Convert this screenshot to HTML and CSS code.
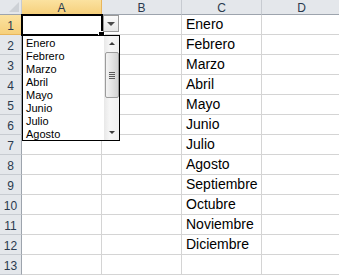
FILE: index.html
```html
<!DOCTYPE html>
<html>
<head>
<meta charset="utf-8">
<link rel="stylesheet" href="styles.css">
</head>
<body>
<div class="sheet">
  <div class="grid">
    <div class="hd corner"><span class="tri"></span></div>
    <div class="hd col sel">A</div>
    <div class="hd col">B</div>
    <div class="hd col">C</div>
    <div class="hd col">D</div>

    <div class="hd row sel">1</div><div class="c"></div><div class="c"></div><div class="c t">Enero</div><div class="c"></div>
    <div class="hd row">2</div><div class="c"></div><div class="c"></div><div class="c t">Febrero</div><div class="c"></div>
    <div class="hd row">3</div><div class="c"></div><div class="c"></div><div class="c t">Marzo</div><div class="c"></div>
    <div class="hd row">4</div><div class="c"></div><div class="c"></div><div class="c t">Abril</div><div class="c"></div>
    <div class="hd row">5</div><div class="c"></div><div class="c"></div><div class="c t">Mayo</div><div class="c"></div>
    <div class="hd row">6</div><div class="c"></div><div class="c"></div><div class="c t">Junio</div><div class="c"></div>
    <div class="hd row">7</div><div class="c"></div><div class="c"></div><div class="c t">Julio</div><div class="c"></div>
    <div class="hd row">8</div><div class="c"></div><div class="c"></div><div class="c t">Agosto</div><div class="c"></div>
    <div class="hd row">9</div><div class="c"></div><div class="c"></div><div class="c t">Septiembre</div><div class="c"></div>
    <div class="hd row">10</div><div class="c"></div><div class="c"></div><div class="c t">Octubre</div><div class="c"></div>
    <div class="hd row">11</div><div class="c"></div><div class="c"></div><div class="c t">Noviembre</div><div class="c"></div>
    <div class="hd row">12</div><div class="c"></div><div class="c"></div><div class="c t">Diciembre</div><div class="c"></div>
    <div class="hd row">13</div><div class="c"></div><div class="c"></div><div class="c"></div><div class="c"></div>
  </div>

  <div class="selbox"><span class="handle"></span></div>
  <div class="ddbtn"><span class="dtri"></span></div>

  <div class="list">
    <ul class="items">
      <li>Enero</li>
      <li>Febrero</li>
      <li>Marzo</li>
      <li>Abril</li>
      <li>Mayo</li>
      <li>Junio</li>
      <li>Julio</li>
      <li>Agosto</li>
    </ul>
    <div class="sb">
      <div class="sb-up"><span class="utri"></span></div>
      <div class="thumb">
        <span class="grip"></span><span class="grip"></span><span class="grip"></span><span class="grip"></span>
      </div>
      <div class="sb-track"></div>
      <div class="sb-down"><span class="dtri2"></span></div>
    </div>
  </div>
</div>
</body>
</html>
```

FILE: styles.css
```css
html, body {
  margin: 0;
  padding: 0;
  background: #ffffff;
}
.sheet {
  position: relative;
  width: 339px;
  height: 276px;
  overflow: hidden;
}
.grid {
  display: grid;
  grid-template-columns: 22px 80px 80px 80px 80px;
  grid-template-rows: 15px repeat(13, 20px);
  font-family: "Liberation Sans", Arial, sans-serif;
}
.grid > div {
  box-sizing: border-box;
}
.c {
  border-right: 1px solid #d4d4d4;
  border-bottom: 1px solid #d4d4d4;
  background: #ffffff;
}
.t {
  font-size: 14px;
  color: #000000;
  display: flex;
  align-items: flex-end;
  padding: 0 0 2px 4px;
  line-height: 16px;
}
.hd {
  background: #e4e7eb;
  color: #2a3a4e;
  font-size: 12px;
  display: flex;
  align-items: center;
  justify-content: center;
}
.col {
  border-right: 1px solid #c7cbd1;
  border-bottom: 1px solid #9da4ad;
  padding-top: 1px;
}
.row {
  border-right: 1px solid #9da4ad;
  border-bottom: 1px solid #c7cbd1;
  padding-top: 2px;
}
.hd.sel {
  background: linear-gradient(#fbe2a0, #f6d07c);
  color: #2a3a4e;
}
.col.sel {
  border-bottom: 1px solid #e7a53b;
  border-right: 1px solid #e8b65c;
}
.row.sel {
  border-right: 1px solid #e7a53b;
  border-bottom: 1px solid #e8b65c;
}
.corner {
  position: relative;
  border-right: 1px solid #c7cbd1;
  border-bottom: 1px solid #9da4ad;
}
.tri {
  position: absolute;
  right: 2px;
  bottom: 2px;
  width: 0;
  height: 0;
  border-left: 10px solid transparent;
  border-bottom: 10px solid #cdd1d6;
}
.selbox {
  position: absolute;
  left: 21px;
  top: 14px;
  width: 82px;
  height: 22px;
  box-sizing: border-box;
  border: 2px solid #000000;
}
.handle {
  position: absolute;
  right: -4px;
  bottom: -4px;
  width: 5px;
  height: 5px;
  background: #000000;
  border: 1px solid #ffffff;
}
.ddbtn {
  position: absolute;
  left: 103px;
  top: 15px;
  width: 16px;
  height: 17px;
  box-sizing: border-box;
  border: 1px solid #9a9a9a;
  background: linear-gradient(#fbfbfb, #e6e6e6);
  display: flex;
  align-items: center;
  justify-content: center;
}
.dtri {
  width: 0;
  height: 0;
  border-left: 4px solid transparent;
  border-right: 4px solid transparent;
  border-top: 4px solid #4a4a4a;
  margin-top: 1px;
}
.list {
  position: absolute;
  left: 22px;
  top: 35px;
  width: 98px;
  height: 106px;
  box-sizing: border-box;
  border: 1px solid #000000;
  background: #ffffff;
  display: flex;
}
.items {
  list-style: none;
  margin: 0;
  padding: 1px 0 0 3px;
  flex: 1;
  font-family: "Liberation Sans", Arial, sans-serif;
  font-size: 11px;
  line-height: 13px;
  color: #000000;
}
.sb {
  width: 15px;
  display: flex;
  flex-direction: column;
  background: linear-gradient(90deg, #e8e8e8, #f6f6f6 40%, #f0f0f0);
}
.sb-up, .sb-down {
  height: 15px;
  display: flex;
  align-items: center;
  justify-content: center;
}
.utri {
  width: 0;
  height: 0;
  border-left: 3px solid transparent;
  border-right: 3px solid transparent;
  border-bottom: 3px solid #3c3c3c;
}
.dtri2 {
  width: 0;
  height: 0;
  border-left: 3px solid transparent;
  border-right: 3px solid transparent;
  border-top: 3px solid #3c3c3c;
}
.thumb {
  margin: 1px 0 0 1px;
  height: 46px;
  box-sizing: border-box;
  border: 1px solid #9c9c9c;
  border-radius: 2px;
  background: linear-gradient(90deg, #f3f3f3, #e3e3e3 50%, #d2d2d2);
  display: flex;
  flex-direction: column;
  align-items: center;
  justify-content: center;
  gap: 1px;
}
.grip {
  width: 6px;
  height: 1px;
  background: #5a5a5a;
}
.sb-track {
  flex: 1;
}
```
